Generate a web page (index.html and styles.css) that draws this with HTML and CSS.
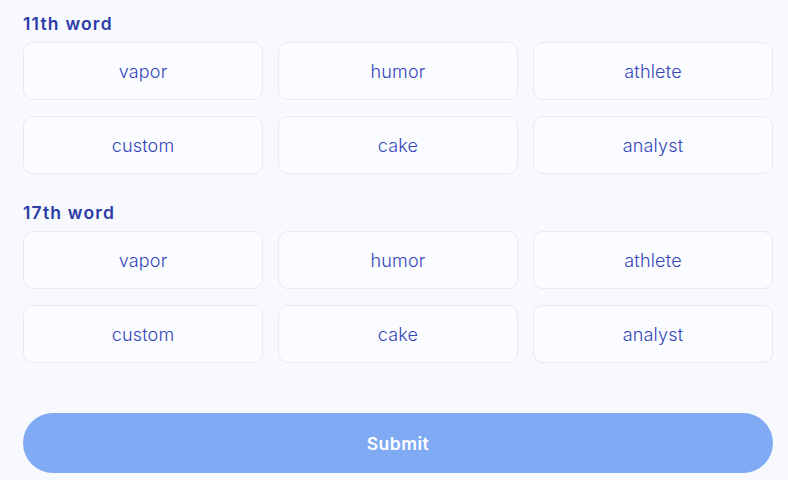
FILE: index.html
```html
<!DOCTYPE html>
<html lang="en">
<head>
    <meta charset="UTF-8">
    <meta name="viewport" content="width=device-width, initial-scale=1.0">
    <title>Verify Recovery Phrase</title>
    <link rel="stylesheet" href="styles.css">
</head>
<body>
    <div class="verify">
        <div class="word-group">
            <div class="word-label">11th word</div>
            <div class="word-grid">
                <button class="word">vapor</button>
                <button class="word">humor</button>
                <button class="word">athlete</button>
                <button class="word">custom</button>
                <button class="word">cake</button>
                <button class="word">analyst</button>
            </div>
        </div>
        <div class="word-group">
            <div class="word-label">17th word</div>
            <div class="word-grid">
                <button class="word">vapor</button>
                <button class="word">humor</button>
                <button class="word">athlete</button>
                <button class="word">custom</button>
                <button class="word">cake</button>
                <button class="word">analyst</button>
            </div>
        </div>
        <button class="submit" disabled>Submit</button>
    </div>
</body>
</html>
```

FILE: styles.css
```css
body {
    font-family: 'Inter', 'Open Sans', sans-serif;
    margin: 0;
    padding: 0;
    background: #f8f9fe;
}
.verify {
    width: 750px;
    padding: 14px 0 0 23px;
}
.word-group {
    margin-bottom: 29px;
}
.word-label {
    font-size: 17.5px;
    line-height: 20px;
    font-weight: 600;
    letter-spacing: 1.2px;
    color: #2b3ca6;
    margin-bottom: 8px;
}
.word-grid {
    display: grid;
    grid-template-columns: repeat(3, 240px);
    grid-auto-rows: 58px;
    gap: 16px 15px;
}
.word {
    font-family: inherit;
    font-size: 18px;
    font-weight: 300;
    letter-spacing: 0.2px;
    color: #3346ba;
    background: #fbfcff;
    border: 1px solid #e7eaf4;
    border-radius: 10px;
    cursor: pointer;
}
.submit {
    display: block;
    width: 750px;
    height: 60px;
    margin-top: 50px;
    border: none;
    border-radius: 30px;
    background: #80aaf3;
    color: #fff;
    font-family: inherit;
    font-size: 17.5px;
    font-weight: 600;
    letter-spacing: 0.5px;
}
```
